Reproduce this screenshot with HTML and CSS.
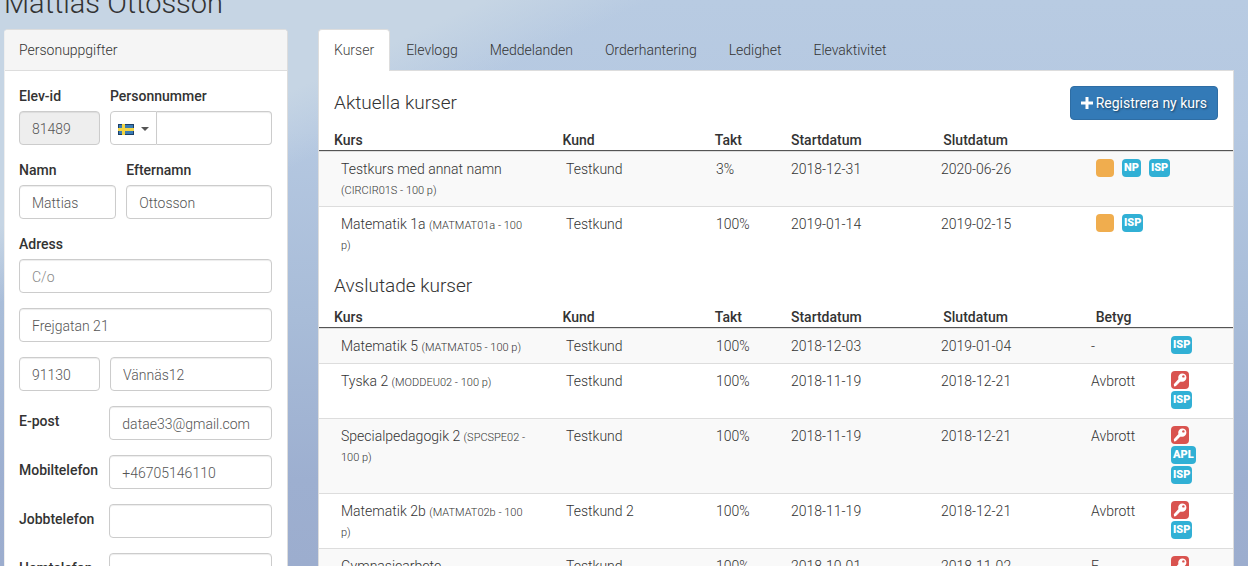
FILE: index.html
```html
<!DOCTYPE html>
<html lang="sv">
<head>
<meta charset="utf-8">
<title>Mattias Ottosson</title>
<link rel="stylesheet" href="styles.css">
</head>
<body>
<svg class="sprite" aria-hidden="true">
  <symbol id="key" viewBox="0 0 14 14">
    <path fill="#fff" d="M9.3 0.6c2.300 0 4.100 1.500 4.100 3.900 0 2.500-1.900 4.300-4.200 4.300-.6 0-1.100-.1-1.500-.3L7 9.300l-.9.1-.2 1-1 .2-.2 1-1 .3-.5 1.200-2.100.3-.3-2.200 4.700-5.100c-.2-.4-.3-.9-.3-1.400C5.200 2.300 7 .6 9.300.6z"/>
    <circle cx="10.400" cy="3.400" r="1.200" fill="#d9534f"/>
  </symbol>
</svg>
<h1 class="page-title">Mattias Ottosson</h1>
<div class="layout">
  <form class="panel person">
    <h2 class="panel-heading">Personuppgifter</h2>
    <div class="panel-body">
      <div class="row one-two">
        <div><label for="eid">Elev-id</label><input id="eid" type="text" value="81489" readonly></div>
        <div><label for="pnr">Personnummer</label>
          <div class="input-group">
            <button type="button" class="country" aria-label="Sverige">
              <svg class="flag" viewBox="0 0 16 11"><path fill="#1d3f66" d="M0 0h16v11H0z"/><path fill="#397bb5" d="M1 1h14v9H1z"/><path fill="#f3d544" d="M4 0h3v11H4zM0 4h16v3H0z"/></svg>
              <span class="caret"></span>
            </button>
            <input id="pnr" type="text">
          </div>
        </div>
      </div>
      <div class="row two-three">
        <div><label for="fn">Namn</label><input id="fn" type="text" value="Mattias"></div>
        <div><label for="en">Efternamn</label><input id="en" type="text" value="Ottosson"></div>
      </div>
      <div class="row">
        <div><label for="co">Adress</label><input id="co" type="text" placeholder="C/o"></div>
      </div>
      <div class="row"><input type="text" aria-label="Gatuadress" value="Frejgatan 21"></div>
      <div class="row one-two">
        <input type="text" aria-label="Postnummer" value="91130">
        <input type="text" aria-label="Ort" value="Vännäs12">
      </div>
      <div class="row inline"><label for="ep">E-post</label><input id="ep" type="text" value="datae33@gmail.com"></div>
      <div class="row inline"><label for="mt">Mobiltelefon</label><input id="mt" type="text" value="+46705146110"></div>
      <div class="row inline"><label for="jt">Jobbtelefon</label><input id="jt" type="text"></div>
      <div class="row inline"><label for="ht">Hemtelefon</label><input id="ht" type="text"></div>
    </div>
  </form>

  <main class="courses">
    <nav class="tabs">
      <a class="active" href="#kurser">Kurser</a>
      <a href="#elevlogg">Elevlogg</a>
      <a href="#meddelanden">Meddelanden</a>
      <a href="#order">Orderhantering</a>
      <a href="#ledighet">Ledighet</a>
      <a href="#aktivitet">Elevaktivitet</a>
    </nav>
    <div class="tab-content">
      <div class="section-head">
        <h3>Aktuella kurser</h3>
        <button type="button" class="primary"><svg class="plus" viewBox="0 0 12 12"><path fill="#fff" d="M4.500 0h3v4.500H12v3H7.500V12h-3V7.500H0v-3h4.500z"/></svg>Registrera ny kurs</button>
      </div>
      <table class="current">
        <thead><tr><th>Kurs</th><th>Kund</th><th>Takt</th><th>Startdatum</th><th>Slutdatum</th></tr></thead>
        <tbody>
          <tr><td>Testkurs med annat namn <small>(CIRCIR01S - 100 p)</small></td><td>Testkund</td><td>3%</td><td>2018-12-31</td><td>2020-06-26</td><td class="badges"><span class="badge wait"></span><span class="badge">NP</span><span class="badge">ISP</span></td></tr>
          <tr><td>Matematik 1a <small>(MATMAT01a - 100 p)</small></td><td>Testkund</td><td>100%</td><td>2019-01-14</td><td>2019-02-15</td><td class="badges"><span class="badge wait"></span><span class="badge">ISP</span></td></tr>
        </tbody>
      </table>
      <div class="section-head later"><h3>Avslutade kurser</h3></div>
      <table class="finished">
        <thead><tr><th>Kurs</th><th>Kund</th><th>Takt</th><th>Startdatum</th><th>Slutdatum</th><th>Betyg</th></tr></thead>
        <tbody>
          <tr><td>Matematik 5 <small>(MATMAT05 - 100 p)</small></td><td>Testkund</td><td>100%</td><td>2018-12-03</td><td>2019-01-04</td><td>-</td><td class="badges"><span class="badge">ISP</span></td></tr>
          <tr><td>Tyska 2 <small>(MODDEU02 - 100 p)</small></td><td>Testkund</td><td>100%</td><td>2018-11-19</td><td>2018-12-21</td><td>Avbrott</td><td class="badges"><span class="badge locked"><svg><use href="#key"/></svg></span><span class="badge">ISP</span></td></tr>
          <tr><td>Specialpedagogik 2 <small>(SPCSPE02 - 100 p)</small></td><td>Testkund</td><td>100%</td><td>2018-11-19</td><td>2018-12-21</td><td>Avbrott</td><td class="badges"><span class="badge locked"><svg><use href="#key"/></svg></span><span class="badge">APL</span><span class="badge">ISP</span></td></tr>
          <tr><td>Matematik 2b <small>(MATMAT02b - 100 p)</small></td><td>Testkund 2</td><td>100%</td><td>2018-11-19</td><td>2018-12-21</td><td>Avbrott</td><td class="badges"><span class="badge locked"><svg><use href="#key"/></svg></span><span class="badge">ISP</span></td></tr>
          <tr><td>Gymnasiearbete</td><td>Testkund</td><td>100%</td><td>2018-10-01</td><td>2018-11-02</td><td>E</td><td class="badges"><span class="badge locked"><svg><use href="#key"/></svg></span></td></tr>
        </tbody>
      </table>
    </div>
  </main>
</div>
</body>
</html>
```
FILE: styles.css
```css
* { box-sizing: border-box; }
body {
  margin: 0;
  height: 100vh;
  overflow: hidden;
  font: 300 14px/20px Roboto, "Open Sans", sans-serif;
  color: #333;
  background:
    linear-gradient(155deg, #c6d5e4 0, #c6d5e4 205px, rgba(198, 213, 228, 0) 275px),
    linear-gradient(180deg, #b8cbe2 0, #b5c8e1 130px, #a8bcd8 320px, #9dafd0 480px, #9cadce 100%);
}
.sprite { display: none; }
.page-title { margin: -14px 4px 8px; font-size: 29px; font-weight: 300; line-height: 35px; }
.layout {
  display: grid;
  grid-template-columns: 71fr 229fr;
  gap: 30px;
  align-items: start;
  padding: 0 14px 0 4px;
}

/* Person form */
.panel { min-width: 0; background: #fff; border: 1px solid #ddd; border-left-color: #eee; border-radius: 4px; }
.panel-heading {
  margin: 0;
  padding: 10px 14px;
  font-size: 14px;
  font-weight: 300;
  background: #f5f5f5;
  border-bottom: 1px solid #ddd;
  border-radius: 3px 3px 0 0;
}
.panel-body { padding: 15px 15px 15px 14px; }
.row { display: grid; gap: 10px; margin-bottom: 15px; }
.one-two { grid-template-columns: 1fr 2fr; }
.two-three { grid-template-columns: 2fr 3fr; }
.inline { grid-template-columns: 5fr 9fr; gap: 0; }
.inline label { padding-top: 5px; margin: 0; }
label { display: block; margin-bottom: 5px; font-weight: 500; }
input {
  display: block;
  width: 100%;
  min-width: 0;
  height: 34px;
  padding: 7px 12px 5px;
  font: inherit;
  color: #555;
  background: #fff;
  border: 1px solid #ccc;
  border-radius: 4px;
  box-shadow: inset 0 1px 1px rgba(0, 0, 0, .075);
}
input::placeholder { color: #888; opacity: 1; }
input[readonly] { background: #eee; }
.input-group { display: flex; }
.input-group input { flex: 1; border-radius: 0 4px 4px 0; border-left: 0; }
.country {
  display: flex;
  align-items: center;
  gap: 7px;
  padding: 2px 7px 0;
  background: #fff;
  border: 1px solid #ccc;
  border-radius: 4px 0 0 4px;
}
.flag { width: 16px; height: 11px; }
.caret { border: 4px solid transparent; border-top-color: #555; border-bottom: 0; }

/* Tabs */
.courses { min-width: 0; }
.tabs { display: flex; border-bottom: 1px solid #ddd; }
.tabs a {
  padding: 10px 15px;
  color: #333;
  text-decoration: none;
  border: 1px solid transparent;
  border-bottom: 0;
  border-radius: 4px 4px 0 0;
}
.tabs .active { margin-bottom: -1px; background: #fff; border-color: #ddd; color: #444; }
.tab-content { background: #fff; border: 1px solid #ddd; border-top: 0; }
.section-head { display: flex; align-items: center; justify-content: space-between; padding: 15px 15px 10px; }
.later { padding: 13px 15px 9px; }
h3 { margin: 0; font-size: 19px; font-weight: 300; line-height: 24px; }
.primary {
  display: flex;
  align-items: center;
  gap: 3px;
  padding: 6px 10px;
  font: inherit;
  font-weight: 400;
  color: #fff;
  text-shadow: 1px 1px 2px rgba(0, 0, 0, .5);
  background: #337ab7;
  border: 1px solid #2e6da4;
  border-radius: 4px;
}
.plus { width: 12px; height: 12px; }

/* Course tables */
table, thead, tbody { display: block; }
tr { display: grid; grid-template-columns: 3fr 2fr 1fr 2fr 2fr 1fr 1fr; }
th { padding: 0 15px; text-align: left; font-weight: 500; }
td { padding: 7px 8px; }
td:first-child { padding-right: 30px; }
thead tr { border-bottom: 1px solid #555; }
tbody tr { padding-left: 14px; border-top: 1px solid #ddd; }
tbody tr:nth-child(odd) { background: #f9f9f9; }
small { font-size: 11px; line-height: 1; }
.badges { display: flex; gap: 8px; padding: 7px 0 7px 13px; }
.current .badges { grid-column: span 2; align-items: flex-start; }
.finished .badges { flex-direction: column; align-items: flex-start; gap: 2px; padding-bottom: 9px; }
.badge {
  min-width: 18px;
  height: 18px;
  padding: 0 2px;
  font-size: 11px;
  font-weight: 900;
  line-height: 18px;
  text-align: center;
  color: #fff;
  background: #31b0d5;
  border-radius: 4px;
}
.wait { background: #f0ad4e; }
.locked { background: #d9534f; }
.badge svg { display: block; width: 14px; height: 14px; margin-top: 2px; }
```
